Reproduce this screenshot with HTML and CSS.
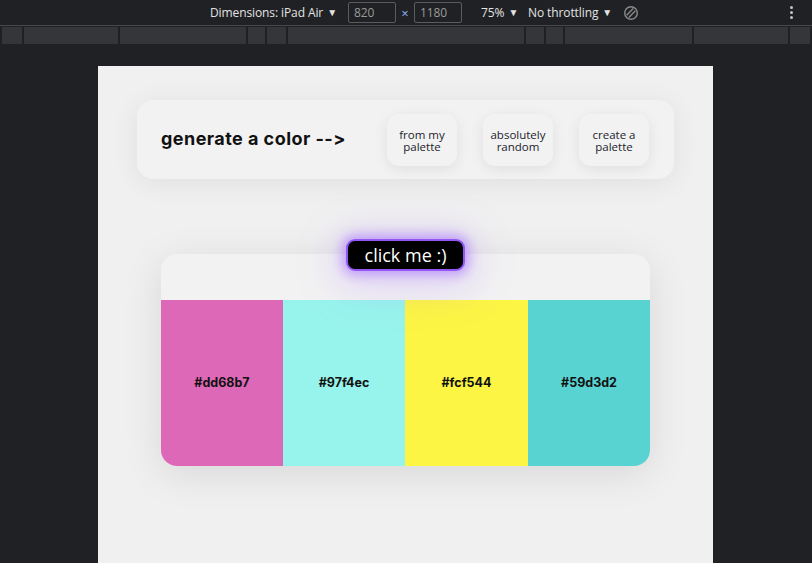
FILE: index.html
```html
<!DOCTYPE html>
<html lang="en">
<head>
<meta charset="utf-8">
<title>generate a color</title>
<link rel="stylesheet" href="styles.css">
</head>
<body>
<div class="devtools">
  <div class="toolbar">
    <div class="device">Dimensions: iPad Air <span class="caret">▼</span></div>
    <div class="dims">
      <span class="dim-input">820</span>
      <span class="times">×</span>
      <span class="dim-input">1180</span>
    </div>
    <div class="zoom">75% <span class="caret">▼</span></div>
    <div class="throttle">No throttling <span class="caret">▼</span></div>
    <svg class="rotate" width="16" height="16" viewBox="0 0 16 16" aria-hidden="true">
      <circle cx="8" cy="8" r="6.3" fill="none" stroke="#8a8a8a" stroke-width="1.4"/>
      <path d="M3.6 10.2 L10.2 3.6 M5.8 12.4 L12.4 5.8" stroke="#8a8a8a" stroke-width="1.4" fill="none"/>
    </svg>
    <div class="spacer"></div>
    <div class="kebab"><i></i><i></i><i></i></div>
  </div>
  <div class="rulers">
    <span class="seg w20"></span>
    <span class="seg w94"></span>
    <span class="seg w126"></span>
    <span class="seg w17"></span>
    <span class="seg w19"></span>
    <span class="seg w236"></span>
    <span class="seg w18"></span>
    <span class="seg w17"></span>
    <span class="seg w127"></span>
    <span class="seg w94"></span>
    <span class="seg w20"></span>
  </div>
  <div class="stage">
    <main class="viewport">
      <header class="generator">
        <h1 class="title">generate a color --&gt;</h1>
        <nav class="options">
          <button class="option">from my palette</button>
          <button class="option">absolutely random</button>
          <button class="option">create a palette</button>
        </nav>
      </header>
      <section class="palette">
        <button class="click-me">click me :)</button>
        <div class="palette-top"></div>
        <div class="swatches">
          <div class="swatch pink">#dd68b7</div>
          <div class="swatch aqua">#97f4ec</div>
          <div class="swatch yellow">#fcf544</div>
          <div class="swatch teal">#59d3d2</div>
        </div>
      </section>
    </main>
  </div>
</div>
</body>
</html>
```
FILE: styles.css
```css
* { box-sizing: border-box; }
html, body { margin: 0; padding: 0; }
body {
  width: 812px;
  height: 563px;
  overflow: hidden;
  background: #202124;
  font-family: "Open Sans", "Liberation Sans", sans-serif;
}
.devtools {
  display: flex;
  flex-direction: column;
  height: 563px;
}
.toolbar {
  height: 26px;
  border-bottom: 1px solid #47494d;
  display: flex;
  align-items: center;
  padding-left: 210px;
  padding-right: 18px;
  color: #e3e3e3;
  font-family: "Open Sans", "Liberation Sans", sans-serif;
  font-size: 12px;
  letter-spacing: -0.1px;
  white-space: nowrap;
}
.caret { font-size: 10px; position: relative; top: -1px; margin-left: 1px; }
.device { width: 138px; }
.dims {
  display: flex;
  align-items: center;
  width: 114px;
}
.dim-input {
  width: 48px;
  height: 21px;
  border: 1px solid #5a5b5f;
  border-radius: 2px;
  color: #9a9a9a;
  padding-left: 5px;
  line-height: 19px;
  font-size: 12px;
}
.times { color: #8ab4f8; font-size: 13px; width: 18px; text-align: center; }
.zoom { margin-left: 19px; width: 38px; }
.throttle { margin-left: 9px; width: 95px; }
.spacer { flex: 1; }
.kebab {
  display: flex;
  flex-direction: column;
  gap: 2px;
  width: 4px;
}
.kebab i {
  display: block;
  width: 3px;
  height: 3px;
  border-radius: 50%;
  background: #c4c4c4;
}
.rulers {
  margin-top: 1px;
  height: 17px;
  display: flex;
  gap: 2px;
  padding-left: 2px;
}
.seg { height: 17px; background: #35363a; }
.w17 { width: 17px; }
.w18 { width: 18px; }
.w19 { width: 19px; }
.w20 { width: 20px; }
.w94 { width: 94px; }
.w126 { width: 126px; }
.w127 { width: 127px; }
.w236 { width: 236px; }
.stage {
  flex: 1;
  padding: 22px 0 0 98px;
  display: flex;
}
.viewport {
  width: 615px;
  background: #f0f0f0;
  padding: 34px 39px 0;
  display: flex;
  flex-direction: column;
  align-items: center;
}
.generator {
  width: 537px;
  height: 79px;
  border-radius: 16px;
  background: #f2f2f2;
  box-shadow: 0 4px 28px rgba(0, 0, 0, 0.07);
  display: flex;
  align-items: center;
  padding: 0 24px;
}
.title {
  margin: 0;
  font-family: "Inter", "Liberation Sans", sans-serif;
  font-weight: 700;
  font-size: 18px;
  letter-spacing: 0.45px;
  color: #111;
  flex: 1;
  position: relative;
  top: -1px;
}
.options {
  display: flex;
  gap: 26px;
  margin-right: 1px;
}
.option {
  width: 70px;
  height: 52px;
  border: none;
  border-radius: 12px;
  background: #f2f2f2;
  box-shadow: 0 3px 14px rgba(0, 0, 0, 0.08);
  font-family: "Open Sans", "Liberation Sans", sans-serif;
  font-size: 11.5px;
  line-height: 12.5px;
  color: #1c1c2c;
  padding: 3px 6px 0;
}
.palette {
  margin-top: 75px;
  width: 489px;
  border-radius: 16px;
  background: #f2f2f2;
  box-shadow: 0 8px 40px rgba(0, 0, 0, 0.10);
  display: flex;
  flex-direction: column;
  position: relative;
}
.palette-top { height: 46px; }
.click-me {
  position: absolute;
  left: 185px;
  top: -15px;
  width: 119px;
  height: 32px;
  background: #000;
  border: 2px solid #9457f5;
  border-radius: 9px;
  color: #fff;
  font-family: "Open Sans", "Liberation Sans", sans-serif;
  font-size: 18px;
  line-height: 26px;
  padding: 0;
  box-shadow: 0 0 12px 4px rgba(160, 100, 255, 0.55), 0 6px 40px 10px rgba(170, 120, 255, 0.25);
  z-index: 2;
}
.swatches {
  display: grid;
  grid-template-columns: 122px 122px 123px 122px;
  height: 166px;
  border-radius: 0 0 16px 16px;
  overflow: hidden;
}
.swatch {
  display: flex;
  align-items: center;
  justify-content: center;
  font-family: "Inter", "Liberation Sans", sans-serif;
  font-weight: 700;
  font-size: 12.5px;
  color: #111;
  padding-bottom: 1px;
}
.pink { background: #dd68b7; }
.aqua { background: #97f4ec; }
.yellow { background: #fcf544; }
.teal { background: #59d3d2; }
```
